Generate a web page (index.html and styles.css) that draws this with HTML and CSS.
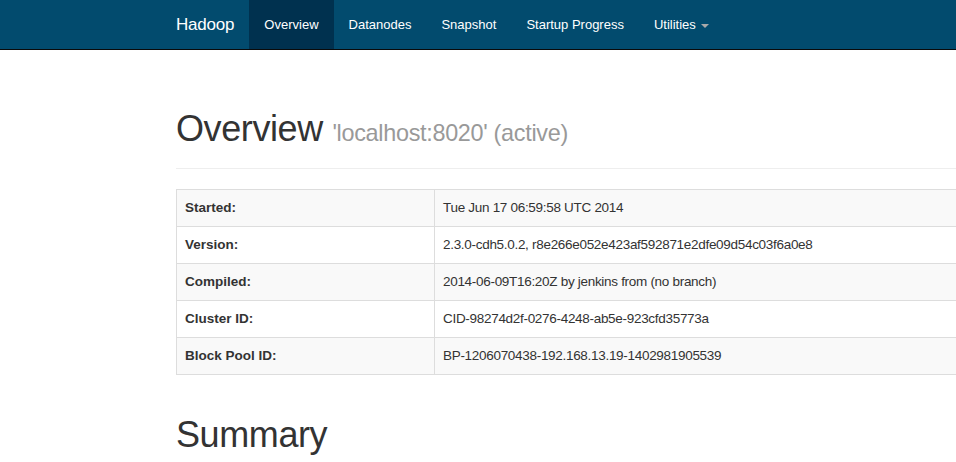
FILE: index.html
```html
<!DOCTYPE html>
<html>
<head>
<meta charset="utf-8">
<title>Namenode information</title>
<link rel="stylesheet" href="styles.css">
</head>
<body>
<header class="navbar">
  <div class="container nav-inner">
    <a class="brand" href="#">Hadoop</a>
    <ul class="nav">
      <li class="active"><a href="#">Overview</a></li>
      <li><a href="#">Datanodes</a></li>
      <li><a href="#">Snapshot</a></li>
      <li><a href="#">Startup Progress</a></li>
      <li><a href="#">Utilities <span class="caret"></span></a></li>
    </ul>
  </div>
</header>
<main class="container">
  <div class="page-header first">
    <h1>Overview <small>'localhost:8020' (active)</small></h1>
  </div>
  <table class="info">
    <tr><th>Started:</th><td>Tue Jun 17 06:59:58 UTC 2014</td></tr>
    <tr><th>Version:</th><td>2.3.0-cdh5.0.2, r8e266e052e423af592871e2dfe09d54c03f6a0e8</td></tr>
    <tr><th>Compiled:</th><td>2014-06-09T16:20Z by jenkins from (no branch)</td></tr>
    <tr><th>Cluster ID:</th><td>CID-98274d2f-0276-4248-ab5e-923cfd35773a</td></tr>
    <tr><th>Block Pool ID:</th><td>BP-1206070438-192.168.13.19-1402981905539</td></tr>
  </table>
  <div class="page-header">
    <h1>Summary</h1>
  </div>
</main>
</body>
</html>
```

FILE: styles.css
```css
html, body {
  margin: 0;
  padding: 0;
  overflow: hidden;
  background: #fff;
}
body {
  font-family: "Liberation Sans", Arial, sans-serif;
  font-size: 14px;
  line-height: 20px;
  color: #333;
}
.container {
  width: 1140px;
  padding: 0 15px;
  margin-left: 161px;
}
.navbar {
  background: #024b6e;
  border-bottom: 1px solid #0a0a0a;
  height: 49px;
}
.nav-inner {
  display: flex;
  align-items: stretch;
  height: 49px;
}
.brand {
  margin-left: -15px;
  padding: 15px;
  font-size: 17px;
  line-height: 20px;
  color: #fff;
  text-decoration: none;
  letter-spacing: -0.2px;
}
.nav {
  display: flex;
  list-style: none;
  margin: 0;
  padding: 0;
}
.nav li a {
  display: block;
  padding: 15px 15px 14px;
  line-height: 20px;
  color: #fff;
  text-decoration: none;
  font-size: 13px;
}
.nav li.active a {
  background: #00314f;
}
.caret {
  display: inline-block;
  width: 0;
  height: 0;
  margin-left: 2px;
  vertical-align: middle;
  border-top: 4px solid #a9a9a9;
  border-left: 4px solid transparent;
  border-right: 4px solid transparent;
}
.page-header {
  margin: 40px 0 20px;
  padding-bottom: 9px;
  border-bottom: 1px solid #eee;
}
.page-header.first {
  margin-top: 59px;
}
h1 {
  margin: 0 0 10px;
  font-size: 36px;
  font-weight: 500;
  line-height: 1.1;
  color: #333;
  letter-spacing: -0.4px;
}
h1 small {
  font-size: 65%;
  font-weight: normal;
  color: #999;
  letter-spacing: -0.3px;
}
.info {
  width: 100%;
  border-collapse: collapse;
  border: 1px solid #ddd;
  margin-bottom: 20px;
}
.info th, .info td {
  padding: 8px;
  line-height: 20px;
  border: 1px solid #ddd;
  text-align: left;
  vertical-align: top;
  font-size: 13.5px;
}
.info th {
  width: 241px;
  font-weight: bold;
}
.info td {
  letter-spacing: -0.3px;
}
.info tr:nth-child(odd) {
  background: #f9f9f9;
}
```
